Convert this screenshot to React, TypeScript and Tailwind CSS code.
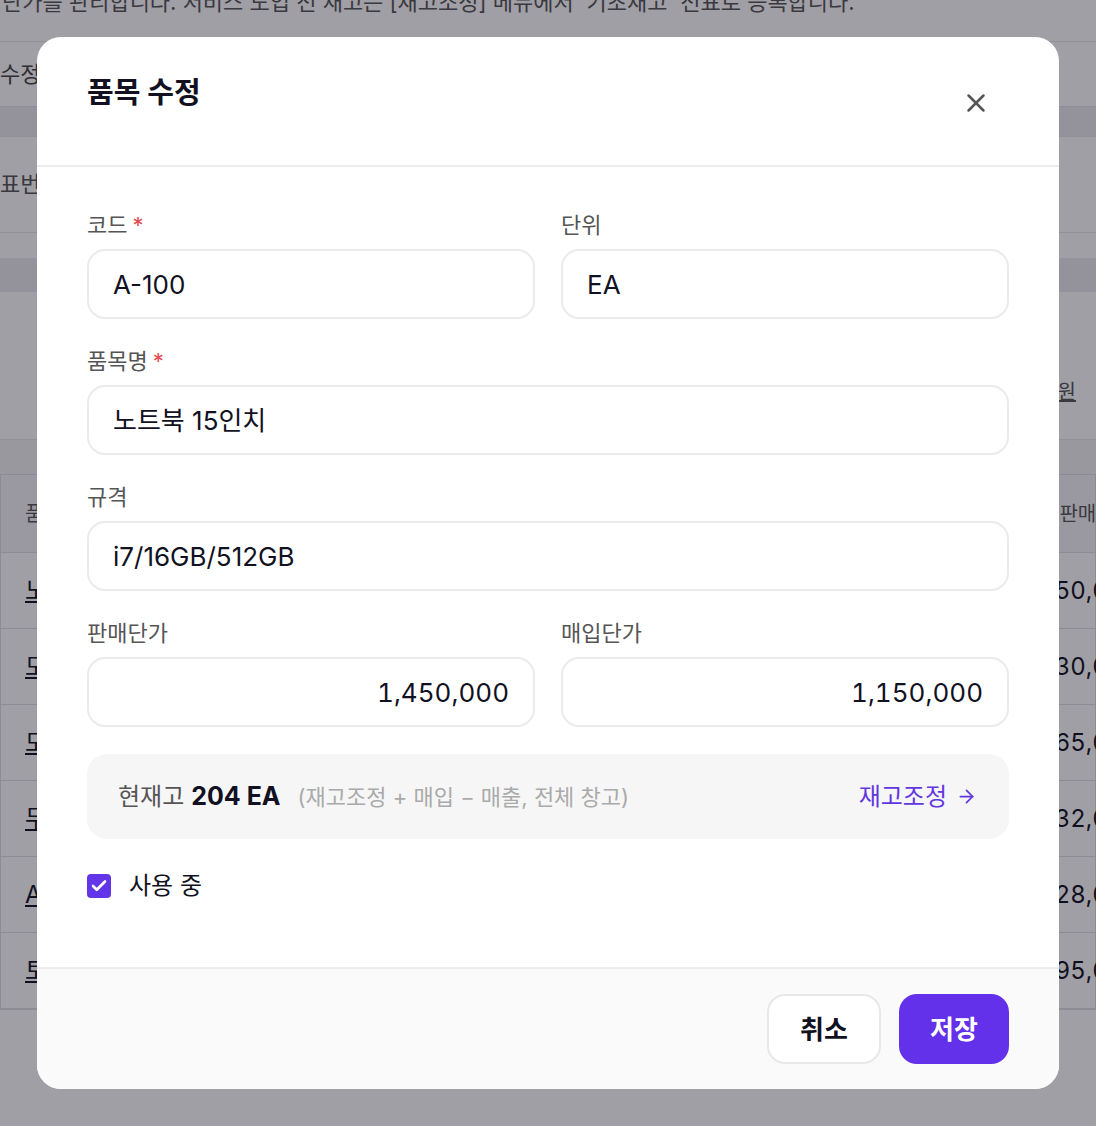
import React from "react";
import { X, ArrowRight, Check } from "lucide-react";

const font = { fontFamily: 'Inter, "Noto Sans CJK KR", sans-serif' };

const rows = ["노트북 15인치", "모니터 27인치", "모니터 32인치", "무선 마우스", "A4 복사용지", "토너 카트리지"];
const prices = ["1,450,000", "330,000", "465,000", "32,000", "28,000", "95,000"];

function BackgroundPage() {
  return (
    <div className="w-[1096px] h-[1126px] overflow-hidden bg-white text-[#111122]">
      <p className="-mt-[14px] pl-[2px] text-[22px] text-[#555] whitespace-nowrap">
        단가를 관리합니다. 서비스 도입 전 재고는 [재고조정] 메뉴에서 '기초재고' 전표로 등록합니다.
      </p>
      <div className="mt-[22px] border-y border-[#e5e5e5]">
        <div className="h-[64px] flex items-center text-[22px] text-[#444]">수정</div>
        <div className="h-[30px] bg-[#ececef] border-t border-[#e2e2e5]" />
      </div>
      <div className="h-[96px] flex items-center text-[22px] text-[#555] border-b border-[#e5e5e5]">표번</div>
      <div className="h-[25px]" />
      <div className="h-[34px] bg-[#ececef]" />
      <div className="h-[148px] flex items-center justify-end pr-[20px] pt-[52px] text-[20px] text-[#555] border-b border-[#e5e5e5]">
        <span className="underline">원</span>
      </div>
      <div className="h-[34px] bg-[#f3f3f5]" />
      <div className="border border-[#e0e0e3]">
        <div className="h-[78px] flex items-center justify-between pl-[24px] bg-[#f6f6f8] border-b border-[#e0e0e3] text-[20px] text-[#555]">
          <span>품목명</span>
          <span className="-mr-[38px]">판매단가</span>
        </div>
        {rows.map((r, i) => (
          <div
            key={r}
            className="h-[76px] flex items-center justify-between pl-[24px] border-b border-[#e0e0e3] text-[24px] tabular-nums"
          >
            <span className="underline">{r}</span>
            <span className="-mr-[44px] whitespace-nowrap">{prices[i]}</span>
          </div>
        ))}
      </div>
    </div>
  );
}

function Field({
  label,
  required,
  value,
  right,
}: {
  label: string;
  required?: boolean;
  value: string;
  right?: boolean;
}) {
  return (
    <div className="flex flex-col gap-[10px]">
      <label className="text-[22px] leading-[28px] text-[#555]">
        {label}
        {required && <span className="ml-[5px] text-[#e5484d]">*</span>}
      </label>
      <div
        className={`h-[70px] rounded-[18px] border-2 border-[#ebebeb] bg-white flex items-center px-[24px] text-[26px] text-[#111122] ${
          right ? "justify-end tabular-nums" : ""
        }`}
      >
        {value}
      </div>
    </div>
  );
}

export default function App() {
  return (
    <div className="relative w-[1096px] h-[1126px] overflow-hidden" style={font}>
      <BackgroundPage />
      <div className="absolute inset-0 bg-[rgba(18,16,30,0.4)] flex items-center justify-center">
        <div className="w-[1022px] h-[1052px] bg-white rounded-[24px] overflow-hidden flex flex-col">
          <div className="h-[130px] flex items-start justify-between pl-[50px] pr-[68px] pt-[36px] border-b-2 border-[#ececec]">
            <h2 className="text-[29px] leading-[40px] font-bold text-[#111122]">품목 수정</h2>
            <X className="mt-[15px] h-[30px] w-[30px] text-[#555]" strokeWidth={2} />
          </div>

          <div className="flex-1 px-[50px] pt-[44px] flex flex-col gap-[28px]">
            <div className="grid grid-cols-2 gap-[26px]">
              <Field label="코드" required value="A-100" />
              <Field label="단위" value="EA" />
            </div>
            <Field label="품목명" required value="노트북 15인치" />
            <Field label="규격" value="i7/16GB/512GB" />
            <div className="grid grid-cols-2 gap-[26px]">
              <Field label="판매단가" value="1,450,000" right />
              <Field label="매입단가" value="1,150,000" right />
            </div>

            <div className="-mt-[1px] h-[85px] rounded-[20px] bg-[#f6f6f7] flex items-center justify-between pl-[31px] pr-[32px]">
              <div className="flex items-baseline whitespace-nowrap">
                <span className="text-[24px] text-[#555]">현재고</span>
                <span className="ml-[7px] text-[25px] font-bold text-[#111122]">204 EA</span>
                <span className="ml-[17px] text-[22px] text-[#aaaaaa]">(재고조정 + 매입 − 매출, 전체 창고)</span>
              </div>
              <div className="flex items-center gap-[9px] text-[24px] text-[#6236e0] whitespace-nowrap">
                <span>재고조정</span>
                <ArrowRight className="h-[21px] w-[21px]" strokeWidth={2} />
              </div>
            </div>

            <div className="mt-[1px] flex items-center gap-[18px]">
              <div className="h-[24px] w-[24px] rounded-[4px] bg-[#6236e8] flex items-center justify-center">
                <Check className="h-[18px] w-[18px] text-white" strokeWidth={3.5} />
              </div>
              <span className="text-[24px] text-[#111122]">사용 중</span>
            </div>
          </div>

          <div className="h-[122px] border-t-2 border-[#ececec] bg-[#fafafa] flex items-center justify-end gap-[18px] pr-[50px]">
            <button className="h-[70px] w-[114px] rounded-[18px] border-2 border-[#e8e8e8] bg-white text-[26px] font-semibold text-[#111122]">
              취소
            </button>
            <button className="h-[70px] w-[110px] rounded-[18px] bg-[#6331ea] text-[26px] font-semibold text-white">
              저장
            </button>
          </div>
        </div>
      </div>
    </div>
  );
}
